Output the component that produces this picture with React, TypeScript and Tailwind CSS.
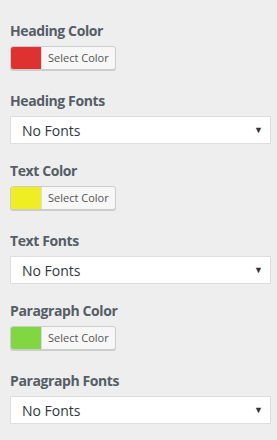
const items = [
  { label: "Heading Color", type: "color", color: "#e03131" },
  { label: "Heading Fonts", type: "select" },
  { label: "Text Color", type: "color", color: "#eeee22" },
  { label: "Text Fonts", type: "select" },
  { label: "Paragraph Color", type: "color", color: "#81d742" },
  { label: "Paragraph Fonts", type: "select" },
];

function ColorButton({ color }: { color: string }) {
  return (
    <button className="flex h-[24px] w-[106px] items-stretch rounded-[3px] border border-[#cccccc] bg-[#f7f7f7] p-0 shadow-[0_1px_0_#cccccc]">
      <span className="w-[30px] rounded-l-[2px]" style={{ backgroundColor: color }} />
      <span className="flex flex-1 items-center border-l border-[#dddddd] pl-[6px] text-[11px] text-[#555555]">
        Select Color
      </span>
    </button>
  );
}

function FontSelect() {
  return (
    <div className="flex h-[28px] w-[261px] items-center justify-between border border-[#dddddd] bg-white pl-[11px] pr-[7px] text-[14px] text-[#32373c]">
      <span>No Fonts</span>
      <span className="text-[9px] text-[#333333]">▼</span>
    </div>
  );
}

export default function App() {
  return (
    <div className="min-h-[440px] w-[277px] bg-[#eeeeee] pt-[21px] font-['Open_Sans',sans-serif]">
      {items.map((item) => (
        <div key={item.label} className="flex h-[70px] flex-col px-[10px]">
          <div className="h-[20px] text-[14px] font-bold leading-[20px] tracking-[-0.4px] text-[#555d66]">
            {item.label}
          </div>
          <div className="mt-[5px]">
            {item.type === "color" ? <ColorButton color={item.color!} /> : <FontSelect />}
          </div>
        </div>
      ))}
    </div>
  );
}
